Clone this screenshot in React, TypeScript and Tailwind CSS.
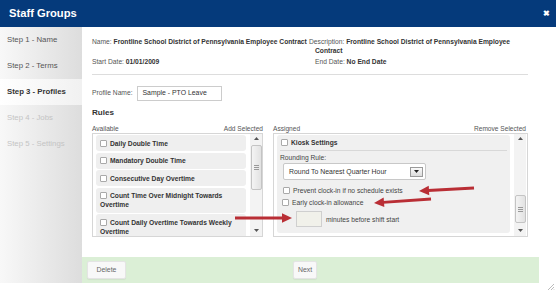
import React from "react";

function Box() {
  return (
    <span className="inline-block w-[7px] h-[7px] border border-[#a9a9a9] bg-white rounded-[1px] align-[-1px] mr-[3px]" />
  );
}

function Scrollbar({ gap, thumb }: { gap: number; thumb: number }) {
  return (
    <div className="w-[12px] h-full flex flex-col items-center bg-[#f3f3f3]">
      <div className="h-[8px] w-full flex items-center justify-center">
        <svg width="5" height="3" viewBox="0 0 5 3"><path d="M0 3 L2.5 0 L5 3 Z" fill="#555" /></svg>
      </div>
      <div style={{ height: gap }} />
      <div
        className="w-[11px] rounded-[2px] border border-[#c4c4c4] bg-linear-to-r from-[#f4f4f4] to-[#e2e2e2] flex flex-col items-center justify-center gap-[1px]"
        style={{ height: thumb }}
      >
        <div className="w-[5px] h-px bg-[#999]" />
        <div className="w-[5px] h-px bg-[#999]" />
        <div className="w-[5px] h-px bg-[#999]" />
      </div>
      <div className="flex-1" />
      <div className="h-[12px] w-full flex items-center justify-center">
        <svg width="5" height="3" viewBox="0 0 5 3"><path d="M0 0 L2.5 3 L5 0 Z" fill="#555" /></svg>
      </div>
    </div>
  );
}

function Arrow({ x1, y1, x2, y2 }: { x1: number; y1: number; x2: number; y2: number }) {
  const dx = x2 - x1;
  const dy = y2 - y1;
  const len = Math.sqrt(dx * dx + dy * dy);
  const ux = dx / len;
  const uy = dy / len;
  const hl = 10;
  const hw = 4.8;
  const bx = x2 - ux * hl;
  const by = y2 - uy * hl;
  const px = -uy;
  const py = ux;
  const pts = `${x2},${y2} ${bx + px * hw},${by + py * hw} ${bx - px * hw},${by - py * hw}`;
  return (
    <g>
      <line x1={x1} y1={y1} x2={bx + ux * 1} y2={by + uy * 1} stroke="#b92e35" strokeWidth="2.8" />
      <polygon points={pts} fill="#b92e35" />
    </g>
  );
}

const items: string[] = [
  "Daily Double Time",
  "Mandatory Double Time",
  "Consecutive Day Overtime",
  "Count Time Over Midnight Towards Overtime",
  "Count Daily Overtime Towards Weekly Overtime",
];

export default function App() {
  return (
    <div className="relative w-[556px] h-[292px] bg-white overflow-hidden font-['Liberation_Sans',Arial,sans-serif] text-[#333]">
      <div className="h-[27px] bg-[#053a7b] flex items-center justify-between pl-[9px] pr-[6px]">
        <span className="text-white font-bold text-[11.2px]">Staff Groups</span>
        <span className="text-white font-bold text-[8px] leading-none">✖</span>
      </div>
      <div className="flex h-[256px]">
        <div className="w-[82px] bg-linear-to-r from-[#f8f8f8] to-[#dddddd] flex flex-col text-[7.8px]">
          <div className="h-[26px] flex items-center pl-[7px] text-[#555]">Step 1 - Name</div>
          <div className="h-[26px] flex items-center pl-[7px] text-[#555]">Step 2 - Terms</div>
          <div className="h-[26px] flex items-center pl-[7px] font-bold text-[#333] bg-linear-to-r from-white to-[#f1f1f1]">Step 3 - Profiles</div>
          <div className="h-[26px] flex items-center pl-[7px] text-[#c4c4c4]">Step 4 - Jobs</div>
          <div className="h-[26px] flex items-center pl-[7px] text-[#c4c4c4]">Step 5 - Settings</div>
        </div>
        <div className="flex-1 flex flex-col">
          <div className="flex-1 pl-[10px] pr-[28px] pt-[10px]">
            <div className="grid grid-cols-[217px_1fr] gap-y-[2px] text-[6.7px] leading-[9px]">
              <div className="whitespace-nowrap">
                <span className="text-[#555]">Name: </span>
                <b>Frontline School District of Pennsylvania Employee Contract</b>
              </div>
              <div className="pl-[6px] -indent-[6px]">
                <span className="text-[#555]">Description: </span>
                <b>Frontline School District of Pennsylvania Employee</b>
                <br />
                <b>Contract</b>
              </div>
              <div>
                <span className="text-[#555]">Start Date: </span>
                <b>01/01/2009</b>
              </div>
              <div className="pl-[6px]">
                <span className="text-[#555]">End Date: </span>
                <b>No End Date</b>
              </div>
            </div>
            <div className="mt-[8px] border-t border-[#dddddd]" />
            <div className="mt-[11px] flex items-center text-[6.7px]">
              <span className="text-[#555]">Profile Name:</span>
              <div className="ml-[4px] w-[85px] h-[15px] border border-[#cccccc] flex items-center pl-[5px] text-[6.9px] text-[#333]">
                Sample - PTO Leave
              </div>
            </div>
            <div className="mt-[7px] text-[8.1px] font-bold leading-[10px]">Rules</div>
            <div className="mt-[6px] flex gap-[10px] text-[6.6px] leading-[9px] text-[#555]">
              <div className="w-[171px] flex justify-between">
                <span>Available</span>
                <span>Add Selected</span>
              </div>
              <div className="w-[255px] flex justify-between pr-[2px]">
                <span>Assigned</span>
                <span>Remove Selected</span>
              </div>
            </div>
            <div className="flex gap-[10px] h-[104px]">
              <div className="w-[171px] h-full border border-[#d6d6d6] flex">
                <div className="flex-1 overflow-hidden pl-[3px] pt-[1px] flex flex-col gap-[1.5px]">
                  {items.map((t) => (
                    <div
                      key={t}
                      className="shrink-0 bg-[#efefef] rounded-[3px] px-[4px] py-[3.5px] text-[6.7px] leading-[9px] font-bold text-[#333]"
                    >
                      <Box />
                      {t}
                    </div>
                  ))}
                </div>
                <div className="w-[4px]" />
                <Scrollbar gap={3} thumb={45} />
              </div>
              <div className="w-[255px] h-full border border-[#d6d6d6] flex pr-[1px]">
                <div className="pl-[3px] pt-[1px]">
                  <div className="w-[233px] h-[98px] bg-[#f0f0f0] rounded-[3px] pt-[3px] text-[6.7px] leading-[9px] text-[#444]">
                    <div className="pl-[4px] font-bold text-[#333] leading-[10px]">
                      <Box />
                      Kiosk Settings
                    </div>
                    <div className="mt-[2px] mx-[3px] border-t border-[#d8d8d8]" />
                    <div className="mt-[2px] pl-[3px]">Rounding Rule:</div>
                    <div className="mt-[1px] ml-[6px] w-[143px] h-[17px] border border-[#c8c8c8] bg-white rounded-[2px] flex items-center justify-between pl-[5px] pr-[2px] text-[6.9px] text-[#333]">
                      <span>Round To Nearest Quarter Hour</span>
                      <span className="w-[13px] h-[10px] border border-[#9a9a9a] bg-linear-to-b from-[#fafafa] to-[#dcdcdc] flex items-center justify-center">
                        <svg width="5" height="3" viewBox="0 0 5 3"><path d="M0 0 L2.5 3 L5 0 Z" fill="#222" /></svg>
                      </span>
                    </div>
                    <div className="mt-[6px] pl-[6px]">
                      <Box />
                      Prevent clock-in if no schedule exists
                    </div>
                    <div className="mt-[3px] pl-[5px]">
                      <Box />
                      Early clock-in allowance
                    </div>
                    <div className="mt-[4px] flex items-center">
                      <div className="ml-[19px] w-[26px] h-[16px] border border-[#cfcfcf] bg-[#f1f1ea]" />
                      <span className="ml-[4px]">minutes before shift start</span>
                    </div>
                  </div>
                </div>
                <div className="w-[4px]" />
                <Scrollbar gap={53} thumb={28} />
              </div>
            </div>
          </div>
          <div className="h-[26px] mr-[17px] bg-[#dbefd6] flex items-center pl-[5px] text-[6.9px] text-[#666]">
            <div className="w-[39px] h-[18px] bg-[#f8f8f8] border border-[#e4e4e4] rounded-[2px] flex items-center justify-center shadow-[0_1px_1px_rgba(0,0,0,0.05)]">
              Delete
            </div>
            <div className="ml-[167px] w-[24px] h-[18px] bg-[#f8f8f8] border border-[#e4e4e4] rounded-[2px] flex items-center justify-center shadow-[0_1px_1px_rgba(0,0,0,0.05)]">
              Next
            </div>
          </div>
        </div>
      </div>
      <svg className="absolute right-[1px] bottom-[1px]" width="8" height="8" viewBox="0 0 8 8">
        <path d="M7 1 L1 7 M7 4 L4 7 M7 6.5 L6.5 7" stroke="#aaa" strokeWidth="0.8" />
      </svg>
      <svg className="absolute left-0 top-0 pointer-events-none" width="556" height="292" viewBox="0 0 556 292">
        <Arrow x1={474} y1={188} x2={419} y2={191} />
        <Arrow x1={431} y1={199} x2={374} y2={203} />
        <Arrow x1={235} y1={218} x2={292} y2={218} />
      </svg>
    </div>
  );
}
